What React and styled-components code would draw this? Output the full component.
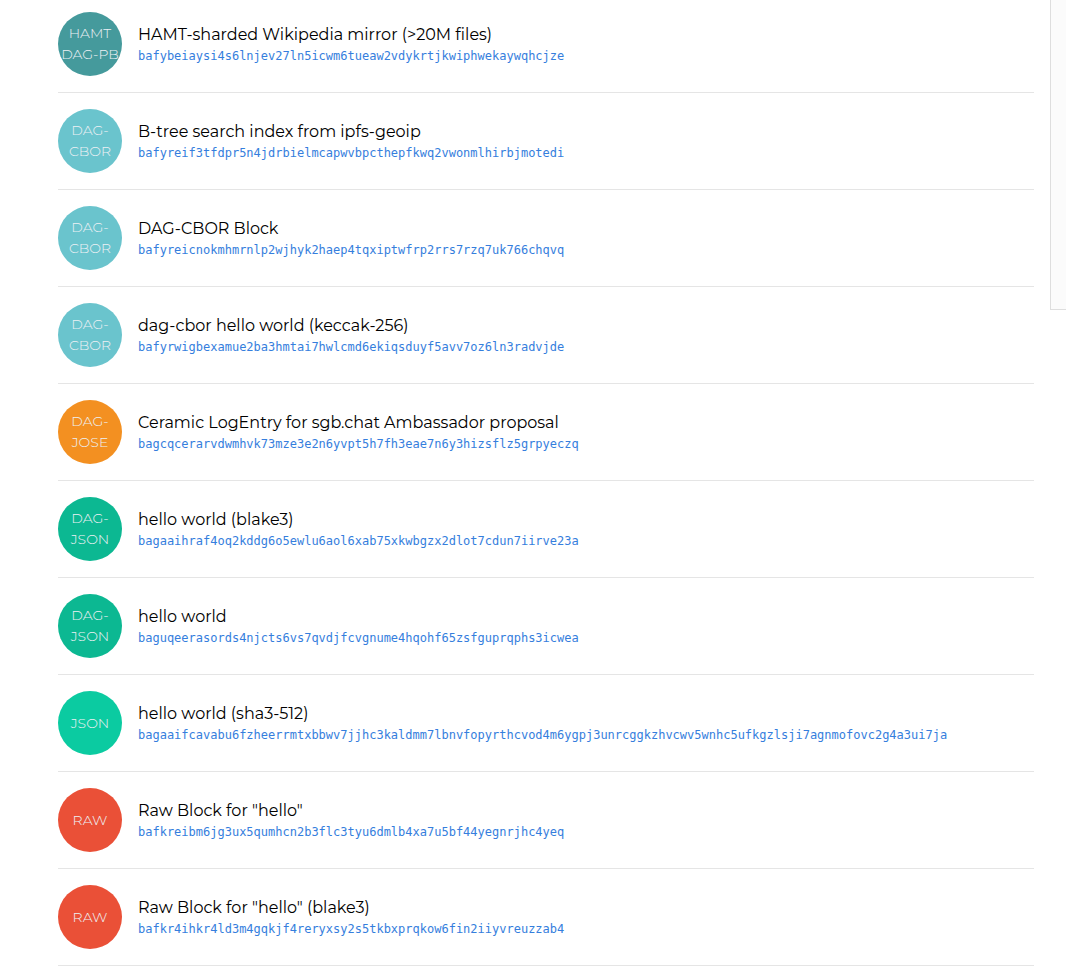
import React from 'react';
import styled, { createGlobalStyle } from 'styled-components';

const GlobalStyle = createGlobalStyle`
  * { box-sizing: border-box; }
  body {
    margin: 0;
    background: #fff;
    color: #000;
    font-family: Montserrat, Inter, sans-serif;
    overflow-x: hidden;
  }
`;

const Page = styled.div`
  display: flex;
  align-items: flex-start;
  gap: 16px;
  padding-left: 58px;
`;

const List = styled.ul`
  flex: 1;
  min-width: 0;
  margin: 0;
  padding: 0;
  list-style: none;
`;

const Item = styled.li`
  border-bottom: 1px solid #e5e5e5;
  padding: 16px 0;

  &:first-child { padding-top: 12px; }
`;

const RowLink = styled.a`
  display: flex;
  align-items: center;
  gap: 16px;
  color: inherit;
  text-decoration: none;
`;

const Badge = styled.span`
  flex: none;
  display: flex;
  flex-direction: column;
  align-items: center;
  justify-content: center;
  width: 64px;
  height: 64px;
  border-radius: 50%;
  background: ${({ $color }) => $color};
  color: #edf0f4;
  font-size: 14px;
  font-weight: 300;
  line-height: 21px;
  white-space: nowrap;
`;

const Details = styled.span`
  display: flex;
  flex-direction: column;
  min-width: 0;
`;

const Title = styled.span`
  font-size: 16px;
  line-height: 24px;
`;

const Cid = styled.code`
  color: #357edd;
  font-family: "DejaVu Sans Mono", monospace;
  font-size: 12px;
  line-height: 18px;
  overflow-wrap: anywhere;
`;

const SidePanel = styled.aside`
  flex: none;
  width: 16px;
  height: 310px;
  border: solid #dedede;
  border-width: 0 0 1px 1px;
  background: #fbfbfb;
`;

const COLORS = {
  pb: '#459a9c',
  cbor: '#6ac4cd',
  jose: '#f39021',
  dagJson: '#0cb892',
  json: '#0bcba1',
  raw: '#ea5037',
};

const EXAMPLES = [
  { badge: ['HAMT', 'DAG-PB'], color: COLORS.pb, title: 'HAMT-sharded Wikipedia mirror (>20M files)', cid: 'bafybeiaysi4s6lnjev27ln5icwm6tueaw2vdykrtjkwiphwekaywqhcjze' },
  { badge: ['DAG-', 'CBOR'], color: COLORS.cbor, title: 'B-tree search index from ipfs-geoip', cid: 'bafyreif3tfdpr5n4jdrbielmcapwvbpcthepfkwq2vwonmlhirbjmotedi' },
  { badge: ['DAG-', 'CBOR'], color: COLORS.cbor, title: 'DAG-CBOR Block', cid: 'bafyreicnokmhmrnlp2wjhyk2haep4tqxiptwfrp2rrs7rzq7uk766chqvq' },
  { badge: ['DAG-', 'CBOR'], color: COLORS.cbor, title: 'dag-cbor hello world (keccak-256)', cid: 'bafyrwigbexamue2ba3hmtai7hwlcmd6ekiqsduyf5avv7oz6ln3radvjde' },
  { badge: ['DAG-', 'JOSE'], color: COLORS.jose, title: 'Ceramic LogEntry for sgb.chat Ambassador proposal', cid: 'bagcqcerarvdwmhvk73mze3e2n6yvpt5h7fh3eae7n6y3hizsflz5grpyeczq' },
  { badge: ['DAG-', 'JSON'], color: COLORS.dagJson, title: 'hello world (blake3)', cid: 'bagaaihraf4oq2kddg6o5ewlu6aol6xab75xkwbgzx2dlot7cdun7iirve23a' },
  { badge: ['DAG-', 'JSON'], color: COLORS.dagJson, title: 'hello world', cid: 'baguqeerasords4njcts6vs7qvdjfcvgnume4hqohf65zsfguprqphs3icwea' },
  { badge: ['JSON'], color: COLORS.json, title: 'hello world (sha3-512)', cid: 'bagaaifcavabu6fzheerrmtxbbwv7jjhc3kaldmm7lbnvfopyrthcvod4m6ygpj3unrcggkzhvcwv5wnhc5ufkgzlsji7agnmofovc2g4a3ui7ja' },
  { badge: ['RAW'], color: COLORS.raw, title: 'Raw Block for "hello"', cid: 'bafkreibm6jg3ux5qumhcn2b3flc3tyu6dmlb4xa7u5bf44yegnrjhc4yeq' },
  { badge: ['RAW'], color: COLORS.raw, title: 'Raw Block for "hello" (blake3)', cid: 'bafkr4ihkr4ld3m4gqkjf4reryxsy2s5tkbxprqkow6fin2iiyvreuzzab4' },
];

function ExampleRow({ badge, color, title, cid }) {
  return (
    <Item>
      <RowLink href={`#/explore/${cid}`}>
        <Badge $color={color}>
          {badge.map((line) => <span key={line}>{line}</span>)}
        </Badge>
        <Details>
          <Title>{title}</Title>
          <Cid>{cid}</Cid>
        </Details>
      </RowLink>
    </Item>
  );
}

export default function App() {
  return (
    <>
      <GlobalStyle />
      <Page>
        <List>
          {EXAMPLES.map((example) => <ExampleRow key={example.cid} {...example} />)}
        </List>
        <SidePanel />
      </Page>
    </>
  );
}
